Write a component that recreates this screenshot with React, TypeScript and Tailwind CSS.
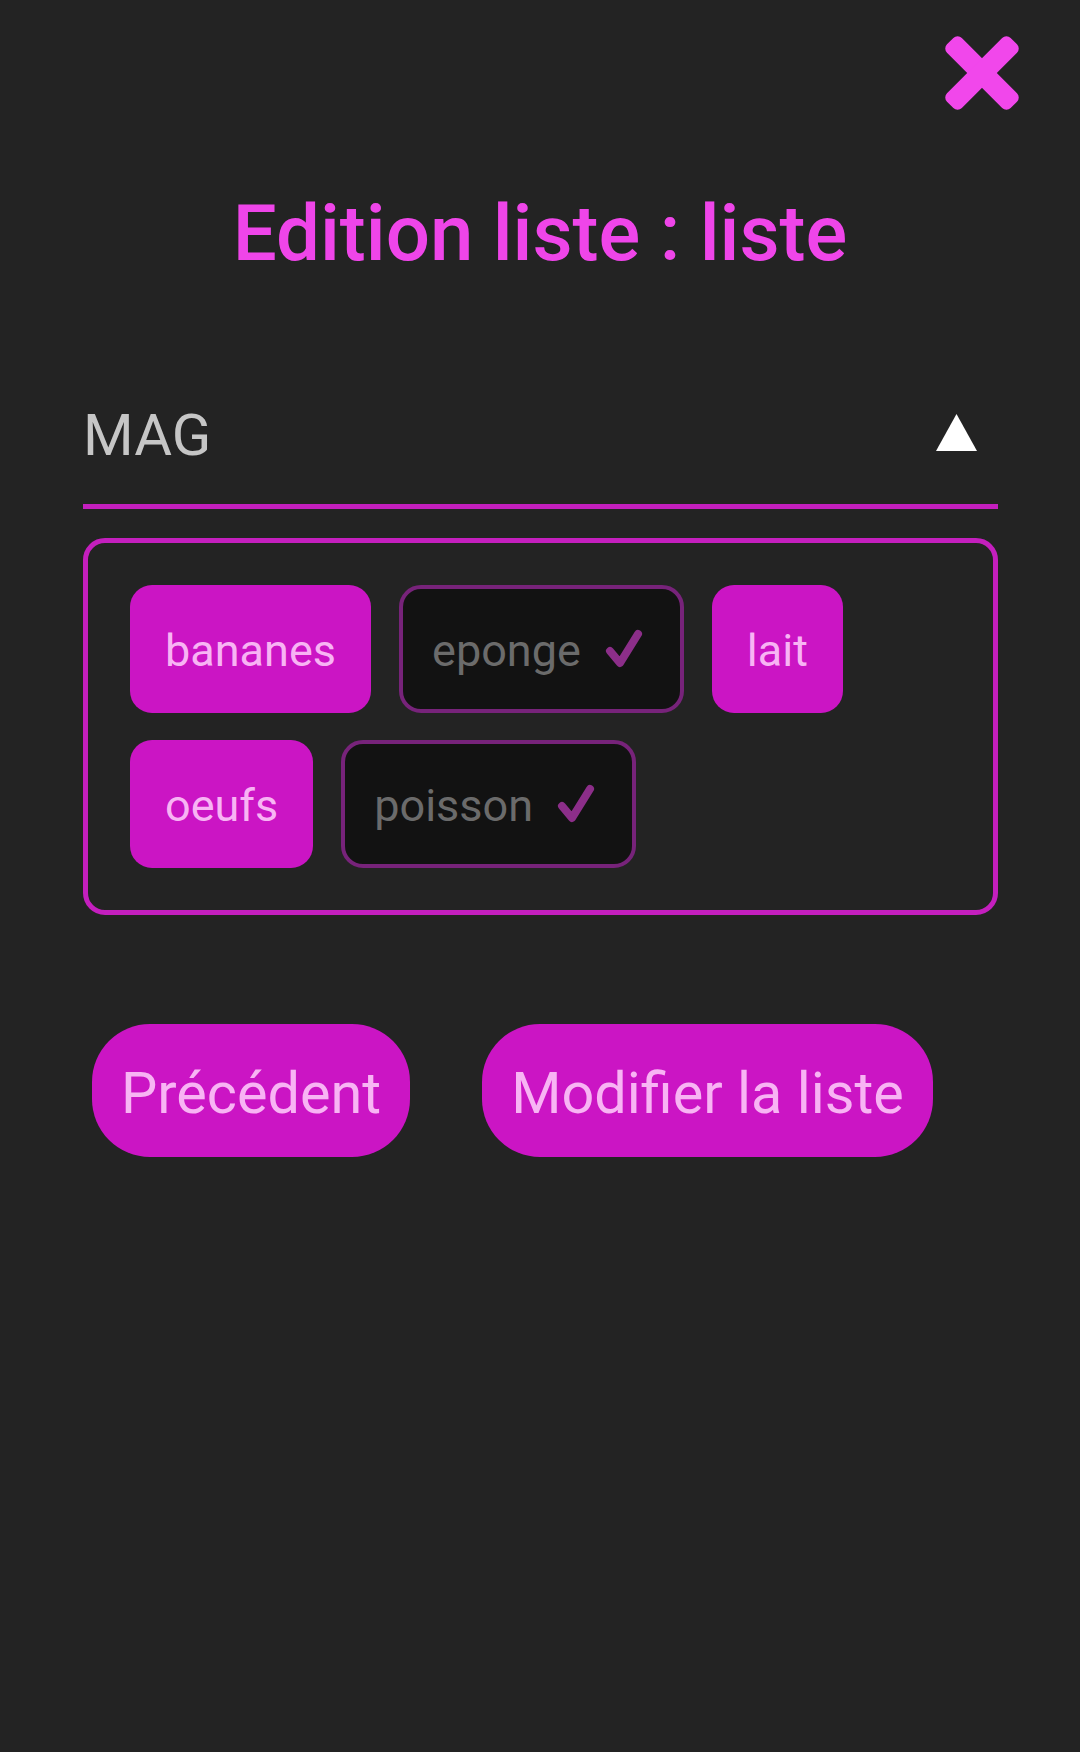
import React from 'react';

const items = [
  { name: 'bananes', done: false },
  { name: 'eponge', done: true },
  { name: 'lait', done: false },
  { name: 'oeufs', done: false },
  { name: 'poisson', done: true },
];

function CloseIcon() {
  return (
    <svg width="80" height="80" viewBox="0 0 80 80">
      <g transform="rotate(45 40 40)">
        <rect x="-5" y="29.5" width="90" height="21" rx="6" fill="#f147eb" />
        <rect x="29.5" y="-5" width="21" height="90" rx="6" fill="#f147eb" />
      </g>
    </svg>
  );
}

function Check() {
  return (
    <svg width="38" height="39" viewBox="0 0 38 39" className="shrink-0">
      <path d="M5 22 L15 34 L33 5" fill="none" stroke="#8c2e89" strokeWidth="8" strokeLinecap="round" strokeLinejoin="round" />
    </svg>
  );
}

export default function App() {
  return (
    <div className="w-[1080px] min-h-[1752px] bg-[#232323] font-['Roboto',sans-serif]">
      {/* close button */}
      <div className="flex justify-end pt-[33px] pr-[58px]">
        <button>
          <CloseIcon />
        </button>
      </div>

      <h1 className="mt-[82px] text-center text-[78px] leading-none font-medium text-[#ef45e9]">
        Edition liste : liste
      </h1>

      <div className="mt-[133px] mx-[83px] w-[915px]">
        {/* store select */}
        <div className="flex items-center justify-between border-b-[5px] border-[#c41fbe] pb-[40px]">
          <span className="text-[58px] leading-none text-[#c6c6c6]">MAG</span>
          <svg width="41" height="37" viewBox="0 0 41 37" className="mr-[21px] mb-[6px]">
            <polygon points="20.5,0 41,37 0,37" fill="#ffffff" />
          </svg>
        </div>

        {/* items */}
        <div className="mt-[29px] border-[5px] border-[#c41fbe] rounded-[22px] p-[42px]">
          <div className="flex flex-wrap gap-x-[28px] gap-y-[27px]">
            {items.map((it) =>
              it.done ? (
                <div
                  key={it.name}
                  className="h-[128px] flex items-center bg-[#121212] border-[4px] border-[#77237a] rounded-[22px] pl-[29px] pr-[37px] pt-[3px]"
                >
                  <span className="text-[45px] leading-none text-[#6b6b6b]">{it.name}</span>
                  <span className="ml-[24px] mb-[5px] flex">
                    <Check />
                  </span>
                </div>
              ) : (
                <div
                  key={it.name}
                  className="h-[128px] flex items-center bg-[#cb15c4] rounded-[22px] px-[35px] pt-[3px]"
                >
                  <span className="text-[45px] leading-none text-[#f8b4f4]">{it.name}</span>
                </div>
              )
            )}
          </div>
        </div>
      </div>

      {/* actions */}
      <div className="mt-[109px] ml-[92px] flex gap-[72px]">
        <button className="bg-[#cb15c4] rounded-[58px] px-[29px] pt-[41px] pb-[34px] text-[57.6px] leading-none text-[#f8b4f4]">
          Précédent
        </button>
        <button className="bg-[#cb15c4] rounded-[58px] px-[29px] pt-[41px] pb-[34px] text-[57.6px] leading-none text-[#f8b4f4]">
          Modifier la liste
        </button>
      </div>
    </div>
  );
}
